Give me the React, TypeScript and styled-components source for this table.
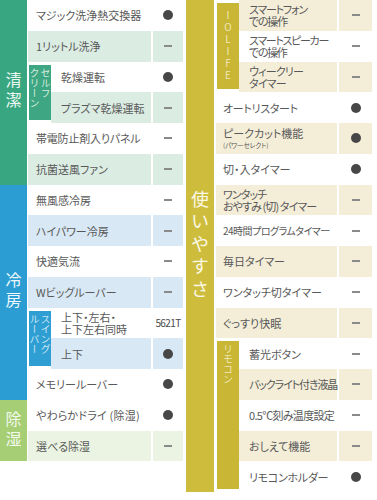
import React from 'react';
import styled, { createGlobalStyle } from 'styled-components';

const GlobalStyle = createGlobalStyle`
  html, body {
    margin: 0;
    padding: 0;
    background: #ffffff;
  }
  body {
    font-family: 'Noto Sans CJK JP', 'Noto Sans', sans-serif;
    color: #585858;
  }
`;

type Tone = {
  main: string;
  tint: string;
  sub: string;
  ink: string;
  subInk: string;
};

const tones: Record<string, Tone> = {
  clean: { main: '#38a781', tint: '#dbece3', sub: '#3ea682', ink: '#eef8f2', subInk: '#d2ecdf' },
  cool: { main: '#2b9dd3', tint: '#d8e8f4', sub: '#2f9ed2', ink: '#eef7fc', subInk: '#cbe6f5' },
  dry: { main: '#a6ce74', tint: '#ebf4e2', sub: '#a6ce74', ink: '#f3f9ec', subInk: '#f3f9ec' },
  easy: { main: '#cebd3c', tint: '#f4eed9', sub: '#c9b634', ink: '#fbf8e6', subInk: '#efe7b8' },
};

const ROW_H = 30.75;

const Page = styled.div`
  display: flex;
  align-items: flex-start;
  gap: 3px;
  width: 377px;
`;

const Table = styled.div<{ $width: number }>`
  display: flex;
  flex-direction: column;
  width: ${(p) => p.$width}px;
  flex-shrink: 0;
`;

const Section = styled.div`
  display: flex;
`;

const Category = styled.div<{ $tone: Tone; $width: number; $size: number }>`
  width: ${(p) => p.$width}px;
  flex-shrink: 0;
  background: ${(p) => p.$tone.main};
  color: ${(p) => p.$tone.ink};
  display: flex;
  align-items: center;
  justify-content: center;
  writing-mode: vertical-rl;
  font-size: ${(p) => p.$size}px;
  letter-spacing: ${(p) => p.$size * 0.25}px;
  line-height: 1;
`;

const Body = styled.div<{ $gap: number }>`
  flex: 1;
  min-width: 0;
  margin-left: ${(p) => p.$gap}px;
  display: flex;
  flex-direction: column;
`;

const SubGroup = styled.div`
  display: flex;
  background: #ffffff;
`;

const SubLabel = styled.div<{ $tone: Tone; $upright?: boolean }>`
  width: 22px;
  flex-shrink: 0;
  margin: 3px 0 3px 1px;
  background: ${(p) => p.$tone.sub};
  color: ${(p) => p.$tone.subInk};
  writing-mode: vertical-rl;
  text-orientation: ${(p) => (p.$upright ? 'upright' : 'mixed')};
  font-size: 10px;
  line-height: 11px;
  letter-spacing: ${(p) => (p.$upright ? '2px' : '0')};
  display: flex;
  align-items: center;
  justify-content: ${(p) => (p.$upright ? 'center' : 'flex-start')};
  padding-top: ${(p) => (p.$upright ? '0' : '3px')};
  box-sizing: border-box;
  white-space: pre;
`;

const SubRows = styled.div`
  flex: 1;
  min-width: 0;
  display: flex;
  flex-direction: column;
`;

const Row = styled.div`
  display: flex;
  height: ${ROW_H}px;
  background: #ffffff;
`;

const Name = styled.div<{ $bg: string; $pad: number; $ls: number; $size: number }>`
  flex: 1;
  min-width: 0;
  background: ${(p) => p.$bg};
  padding-left: ${(p) => p.$pad}px;
  display: flex;
  flex-direction: column;
  justify-content: center;
  font-size: ${(p) => p.$size}px;
  line-height: 12px;
  letter-spacing: ${(p) => p.$ls}px;
  white-space: pre;
  font-feature-settings: 'palt';
`;

const Small = styled.span`
  display: block;
  font-size: 6.5px;
  line-height: 7px;
  margin-top: 3px;
  letter-spacing: 0;
`;

const Value = styled.div<{ $bg: string; $width: number }>`
  width: ${(p) => p.$width}px;
  flex-shrink: 0;
  margin-left: 2px;
  background: ${(p) => p.$bg};
  display: flex;
  align-items: center;
  justify-content: center;
  font-size: 10px;
  letter-spacing: -0.6px;
  color: #4a4a4a;
`;

const Dot = styled.span`
  width: 10px;
  height: 10px;
  border-radius: 50%;
  background: #474747;
`;

const Dash = styled.span`
  width: 8px;
  height: 2px;
  background: #8a8a8a;
`;

type Item = { name: string; small?: string; value: string; tint?: boolean; ls?: number; size?: number };
type Group = { label?: string; upright?: boolean; items: Item[] };
type Block = { title: string; tone: Tone; size: number; groups: Group[] };

const left: Block[] = [
  {
    title: '清潔',
    tone: tones.clean,
    size: 16,
    groups: [
      { items: [{ name: 'マジック洗浄熱交換器', value: 'dot' }, { name: '1リットル洗浄', value: '-', tint: true }] },
      {
        label: 'セルフ\nクリーン',
        items: [
          { name: '乾燥運転', value: 'dot' },
          { name: 'プラズマ乾燥運転', value: '-', tint: true },
        ],
      },
      { items: [{ name: '帯電防止剤入りパネル', value: '-', ls: -0.2 }, { name: '抗菌送風ファン', value: '-', tint: true }] },
    ],
  },
  {
    title: '冷房',
    tone: tones.cool,
    size: 16,
    groups: [
      {
        items: [
          { name: '無風感冷房', value: '-' },
          { name: 'ハイパワー冷房', value: '-', tint: true },
          { name: '快適気流', value: '-' },
          { name: 'Wビッグルーバー', value: '-', tint: true },
        ],
      },
      {
        label: 'スイング\nルーバー',
        items: [
          { name: '上下・左右・\n上下左右同時', value: '5621T' },
          { name: '上下', value: 'dot', tint: true },
        ],
      },
      { items: [{ name: 'メモリールーバー', value: 'dot' }] },
    ],
  },
  {
    title: '除湿',
    tone: tones.dry,
    size: 16,
    groups: [
      { items: [{ name: 'やわらかドライ (除湿)', value: 'dot', ls: 0.2 }, { name: '選べる除湿', value: '-', tint: true }] },
    ],
  },
];

const right: Block[] = [
  {
    title: '使いやすさ',
    tone: tones.easy,
    size: 18,
    groups: [
      {
        label: 'IOLIFE',
        upright: true,
        items: [
          { name: 'スマートフォン\nでの操作', value: '-', tint: true, ls: -1.2 },
          { name: 'スマートスピーカー\nでの操作', value: '-', ls: -1.3 },
          { name: 'ウィークリー\nタイマー', value: '-', tint: true, ls: -0.8 },
        ],
      },
      {
        items: [
          { name: 'オートリスタート', value: 'dot', ls: -0.3 },
          { name: 'ピークカット機能', small: '(パワーセレクト)', value: 'dot', tint: true },
          { name: '切・入タイマー', value: 'dot' },
          { name: 'ワンタッチ\nおやすみ (切) タイマー', value: '-', tint: true, ls: -0.9 },
          { name: '24時間プログラムタイマー', value: '-', ls: -0.5, size: 10 },
          { name: '毎日タイマー', value: '-', tint: true },
          { name: 'ワンタッチ切タイマー', value: '-' },
          { name: 'ぐっすり快眠', value: '-', tint: true },
        ],
      },
      {
        label: 'リモコン',
        items: [
          { name: '蓄光ボタン', value: '-' },
          { name: 'バックライト付き液晶', value: '-', tint: true, ls: -1.1 },
          { name: '0.5℃刻み温度設定', value: '-', ls: -0.7 },
          { name: 'おしえて機能', value: '-', tint: true },
          { name: 'リモコンホルダー', value: 'dot', ls: -0.3 },
        ],
      },
    ],
  },
];

const Mark = ({ value }: { value: string }) => {
  if (value === 'dot') return <Dot />;
  if (value === '-') return <Dash />;
  return <>{value}</>;
};

type Dims = { cat: number; gap: number; val: number; pad: number; subPad: number };

const Rows = ({ items, tone, dims, pad }: { items: Item[]; tone: Tone; dims: Dims; pad: number }) => (
  <>
    {items.map((it) => {
      const bg = it.tint ? tone.tint : '#ffffff';
      return (
        <Row key={it.name}>
          <Name $bg={bg} $pad={pad} $ls={it.ls ?? 0} $size={it.size ?? 11}>
            <span>{it.name}</span>
            {it.small && <Small>{it.small}</Small>}
          </Name>
          <Value $bg={bg} $width={dims.val}>
            <Mark value={it.value} />
          </Value>
        </Row>
      );
    })}
  </>
);

const TableBlock = ({ blocks, dims, width }: { blocks: Block[]; dims: Dims; width: number }) => (
  <Table $width={width}>
    {blocks.map((b) => (
      <Section key={b.title}>
        <Category $tone={b.tone} $width={dims.cat} $size={b.size}>
          {b.title}
        </Category>
        <Body $gap={dims.gap}>
          {b.groups.map((g, i) =>
            g.label ? (
              <SubGroup key={i}>
                <SubLabel $tone={b.tone} $upright={g.upright}>
                  {g.label}
                </SubLabel>
                <SubRows>
                  <Rows items={g.items} tone={b.tone} dims={dims} pad={dims.subPad} />
                </SubRows>
              </SubGroup>
            ) : (
              <Rows key={i} items={g.items} tone={b.tone} dims={dims} pad={dims.pad} />
            )
          )}
        </Body>
      </Section>
    ))}
  </Table>
);

export default function App() {
  return (
    <>
      <GlobalStyle />
      <Page>
        <TableBlock blocks={left} width={183} dims={{ cat: 27, gap: 1, val: 30, pad: 8, subPad: 10 }} />
        <TableBlock blocks={right} width={186} dims={{ cat: 28, gap: 2, val: 33, pad: 7, subPad: 10 }} />
      </Page>
    </>
  );
}
